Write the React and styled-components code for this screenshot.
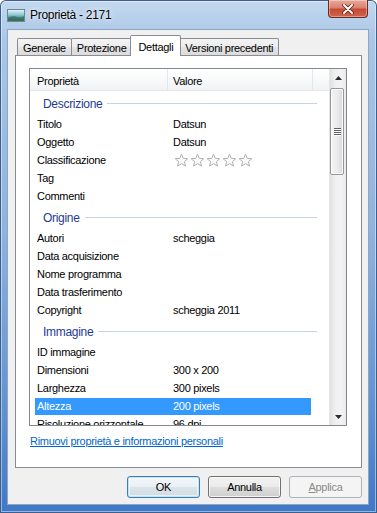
import React from 'react';
import styled, { createGlobalStyle } from 'styled-components';

const GlobalStyle = createGlobalStyle`
  html, body {
    margin: 0;
    padding: 0;
    background: #fff;
  }
  body {
    font-family: 'Liberation Sans', Arial, sans-serif;
  }
`;

const Window = styled.div`
  width: 377px;
  height: 513px;
  box-sizing: border-box;
  display: flex;
  flex-direction: column;
  padding: 0 8px 8px 7px;
  border-radius: 6px 6px 0 0;
  background: linear-gradient(180deg, #c3d9ef 0%, #a9c6e6 8%, #8fb3de 45%, #5f92d2 80%, #3f78c6 100%);
  box-shadow: inset 0 0 0 1px #3d5f8f, inset 0 0 0 2px rgba(255, 255, 255, 0.45);
`;

const TitleBar = styled.div`
  height: 29px;
  flex: none;
  display: flex;
`;

const AppIcon = styled.svg`
  align-self: center;
  margin-top: 1px;
  flex: none;
`;

const Caption = styled.span`
  align-self: center;
  margin-left: 5px;
  font-size: 12px;
  letter-spacing: -0.3px;
  color: #000;
  text-shadow: 0 0 6px rgba(255, 255, 255, 0.9), 0 0 2px rgba(255, 255, 255, 0.8);
`;

const CloseButton = styled.div`
  margin-left: auto;
  margin-right: 1px;
  width: 40px;
  height: 18px;
  box-sizing: border-box;
  display: flex;
  align-items: center;
  justify-content: center;
  border: 1px solid #6a2a22;
  border-top: none;
  border-radius: 0 0 4px 4px;
  background: linear-gradient(180deg, #e9a99b 0%, #d98170 45%, #c74a35 55%, #d0654c 100%);
  box-shadow: inset 0 0 0 1px rgba(255, 255, 255, 0.35);
`;

const Client = styled.div`
  flex: 1;
  display: flex;
  flex-direction: column;
  padding: 5px 6px 0 7px;
  background: #f0f0f0;
  border: 1px solid #8ea6c4;
`;

const TabStrip = styled.div`
  height: 20px;
  flex: none;
  display: flex;
  align-items: flex-end;
  padding-left: 2px;
  position: relative;
  z-index: 2;
`;

const Tab = styled.div`
  position: relative;
  box-sizing: border-box;
  height: ${({ $active }) => ($active ? '21px' : '17px')};
  margin-bottom: ${({ $active }) => ($active ? '-1px' : '0')};
  margin-left: ${({ $active }) => ($active ? '-2px' : '-1px')};
  margin-right: ${({ $active }) => ($active ? '-1px' : '0')};
  z-index: ${({ $active }) => ($active ? 2 : 1)};
  padding: ${({ $active }) => ($active ? '2px 7px 0' : '2px 5px 0')};
  display: flex;
  align-items: center;
  border: 1px solid #898c95;
  border-bottom: none;
  border-radius: 2px 2px 0 0;
  background: ${({ $active }) =>
    $active ? '#fff' : 'linear-gradient(180deg, #f3f3f3 0%, #ececec 50%, #e3e3e3 51%, #dcdcdc 100%)'};
  font-size: 11px;
  letter-spacing: -0.3px;
  color: #000;
  &:first-child {
    margin-left: 0;
  }
`;

const Panel = styled.div`
  height: 413px;
  box-sizing: border-box;
  flex: none;
  background: #fff;
  border: 1px solid #898c95;
  padding: 12px 14px 0 13px;
`;

const ListView = styled.div`
  width: 318px;
  height: 358px;
  box-sizing: border-box;
  display: flex;
  border: 1px solid #828790;
  background: #fff;
`;

const ListContent = styled.div`
  width: 299px;
  display: flex;
  flex-direction: column;
  overflow: hidden;
`;

const Header = styled.div`
  height: 22px;
  box-sizing: border-box;
  flex: none;
  display: flex;
  background: linear-gradient(180deg, #ffffff 0%, #fafbfb 40%, #f1f2f4 100%);
  border-bottom: 1px solid #e4e7eb;
`;

const HeaderCell = styled.div`
  box-sizing: border-box;
  width: ${({ $w }) => ($w ? `${$w}px` : 'auto')};
  flex: ${({ $w }) => ($w ? 'none' : '1')};
  padding: 3px 0 0 ${({ $pad }) => $pad || 0}px;
  display: flex;
  align-items: center;
  border-right: ${({ $w }) => ($w ? '1px solid #e3e6eb' : 'none')};
  font-size: 11px;
  letter-spacing: -0.3px;
  color: #000;
`;

const Rows = styled.div`
  flex: 1;
  padding-left: 5px;
  overflow: hidden;
`;

const GroupRow = styled.div`
  width: 282px;
  height: 24px;
  box-sizing: border-box;
  padding: 1px 0 0 8px;
  display: flex;
  align-items: center;
`;

const GroupLabel = styled.span`
  font-size: 12px;
  letter-spacing: -0.3px;
  color: #1e3a94;
`;

const GroupLine = styled.div`
  flex: 1;
  height: 1px;
  margin-left: 5px;
  background: #c6d4e6;
`;

const Row = styled.div`
  width: 276px;
  height: 18px;
  display: flex;
  align-items: center;
  font-size: 11px;
  letter-spacing: -0.3px;
  color: ${({ $selected }) => ($selected ? '#fff' : '#000')};
  background: ${({ $selected }) => ($selected ? '#3399ff' : 'transparent')};
  box-shadow: ${({ $selected }) => ($selected ? 'inset 0 1px 0 #fff' : 'none')};
`;

const Label = styled.span`
  width: 138px;
  box-sizing: border-box;
  padding-left: 2px;
  flex: none;
  white-space: nowrap;
`;

const Value = styled.span`
  display: flex;
  white-space: nowrap;
`;

const Stars = styled.span`
  display: flex;
  gap: 1px;
  margin-left: 1px;
`;

const ScrollBar = styled.div`
  width: 17px;
  display: flex;
  flex-direction: column;
  background: linear-gradient(90deg, #e1e1e1 0%, #efefef 30%, #f3f3f3 70%, #e9e9e9 100%);
  border-left: 1px solid #e6e6e6;
  box-sizing: border-box;
`;

const ArrowButton = styled.div`
  height: 17px;
  flex: none;
  display: flex;
  align-items: center;
  justify-content: center;
`;

const Thumb = styled.div`
  height: 87px;
  margin: 2px 2px 0 0;
  box-sizing: border-box;
  display: flex;
  flex-direction: column;
  align-items: center;
  justify-content: center;
  gap: 1px;
  border: 1px solid #979797;
  border-radius: 2px;
  background: linear-gradient(90deg, #f4f4f4 0%, #ececec 50%, #d9d9d9 100%);
  box-shadow: inset 0 0 0 1px rgba(255, 255, 255, 0.8);
`;

const Grip = styled.div`
  width: 7px;
  height: 1px;
  background: #5f5f5f;
  box-shadow: 0 1px 0 #fff;
`;

const Track = styled.div`
  flex: 1;
`;

const RemoveLink = styled.a`
  display: inline-block;
  margin: 9px 0 0 1px;
  font-size: 11px;
  letter-spacing: -0.3px;
  color: #0066cc;
  text-decoration: underline;
`;

const ButtonRow = styled.div`
  margin-top: 8px;
  display: flex;
  justify-content: flex-end;
  gap: 8px;
`;

const Button = styled.button`
  width: 73px;
  height: 22px;
  box-sizing: border-box;
  padding: 0;
  font-family: 'Liberation Sans', Arial, sans-serif;
  font-size: 11px;
  letter-spacing: -0.3px;
  border-radius: 3px;
  color: ${({ disabled }) => (disabled ? '#8a8a8a' : '#000')};
  border: 1px solid ${({ $default, disabled }) => ($default ? '#3c7fb1' : disabled ? '#adb2b5' : '#707070')};
  background: ${({ $default, disabled }) =>
    disabled
      ? '#f4f4f4'
      : $default
      ? 'linear-gradient(180deg, #f2f6f9 0%, #eaf0f4 50%, #dbe4ea 51%, #cfdbe3 100%)'
      : 'linear-gradient(180deg, #f2f2f2 0%, #ebebeb 50%, #dddddd 51%, #cfcfcf 100%)'};
  box-shadow: ${({ $default, disabled }) =>
    disabled ? 'none' : $default ? 'inset 0 0 0 1px #bfe2f7, inset 0 0 0 2px rgba(255,255,255,0.5)' : 'inset 0 0 0 1px rgba(255,255,255,0.75)'};
`;

const Star = () => (
  <svg width="15" height="15" viewBox="0 0 15 15">
    <path
      d="M7.5 1.2 L9.3 5.4 L13.8 5.7 L10.4 8.6 L11.5 13.1 L7.5 10.7 L3.5 13.1 L4.6 8.6 L1.2 5.7 L5.7 5.4 Z"
      fill="#fafafa"
      stroke="#a8a8a8"
      strokeWidth="0.9"
      strokeLinejoin="round"
    />
  </svg>
);

const Arrow = ({ down }) => (
  <svg width="7" height="4" viewBox="0 0 7 4">
    <path d={down ? 'M0 0 H7 L3.5 4 Z' : 'M3.5 0 L7 4 H0 Z'} fill="#2b2b2b" />
  </svg>
);

const groups = [
  {
    title: 'Descrizione',
    rows: [
      ['Titolo', 'Datsun'],
      ['Oggetto', 'Datsun'],
      ['Classificazione', 'stars'],
      ['Tag', ''],
      ['Commenti', ''],
    ],
  },
  {
    title: 'Origine',
    rows: [
      ['Autori', 'scheggia'],
      ['Data acquisizione', ''],
      ['Nome programma', ''],
      ['Data trasferimento', ''],
      ['Copyright', 'scheggia 2011'],
    ],
  },
  {
    title: 'Immagine',
    rows: [
      ['ID immagine', ''],
      ['Dimensioni', '300 x 200'],
      ['Larghezza', '300 pixels'],
      ['Altezza', '200 pixels'],
      ['Risoluzione orizzontale', '96 dpi'],
    ],
  },
];

export default function App() {
  return (
    <>
      <GlobalStyle />
      <Window>
        <TitleBar>
          <AppIcon width="18" height="13" viewBox="0 0 18 13">
            <defs>
              <linearGradient id="sky" x1="0" y1="0" x2="0" y2="1">
                <stop offset="0" stopColor="#e9f6f8" />
                <stop offset="0.45" stopColor="#8fc7d6" />
                <stop offset="0.7" stopColor="#3f8ea3" />
                <stop offset="1" stopColor="#2b5e6e" />
              </linearGradient>
            </defs>
            <rect x="0.5" y="0.5" width="17" height="12" fill="url(#sky)" stroke="#6d8793" />
            <path d="M1 9 Q6 6 10 8 T17 7 V12 H1 Z" fill="#3e6f58" opacity="0.8" />
          </AppIcon>
          <Caption>Proprietà - 2171</Caption>
          <CloseButton>
            <svg width="12" height="10" viewBox="0 0 12 10">
              <path d="M2 1 L10 9 M10 1 L2 9" stroke="#4a1a14" strokeWidth="3.4" strokeLinecap="round" />
              <path d="M2 1 L10 9 M10 1 L2 9" stroke="#fff" strokeWidth="2" strokeLinecap="round" />
            </svg>
          </CloseButton>
        </TitleBar>
        <Client>
          <TabStrip>
            <Tab>Generale</Tab>
            <Tab>Protezione</Tab>
            <Tab $active>Dettagli</Tab>
            <Tab>Versioni precedenti</Tab>
          </TabStrip>
          <Panel>
            <ListView>
              <ListContent>
                <Header>
                  <HeaderCell $w={138} $pad={7}>Proprietà</HeaderCell>
                  <HeaderCell $w={145} $pad={5}>Valore</HeaderCell>
                  <HeaderCell />
                </Header>
                <Rows>
                  {groups.map((g) => (
                    <React.Fragment key={g.title}>
                      <GroupRow>
                        <GroupLabel>{g.title}</GroupLabel>
                        <GroupLine />
                      </GroupRow>
                      {g.rows.map(([label, value]) => (
                        <Row key={label} $selected={label === 'Altezza'}>
                          <Label>{label}</Label>
                          <Value>
                            {value === 'stars' ? (
                              <Stars>
                                {[0, 1, 2, 3, 4].map((i) => (
                                  <Star key={i} />
                                ))}
                              </Stars>
                            ) : (
                              value
                            )}
                          </Value>
                        </Row>
                      ))}
                    </React.Fragment>
                  ))}
                </Rows>
              </ListContent>
              <ScrollBar>
                <ArrowButton>
                  <Arrow />
                </ArrowButton>
                <Thumb>
                  <Grip />
                  <Grip />
                  <Grip />
                  <Grip />
                </Thumb>
                <Track />
                <ArrowButton>
                  <Arrow down />
                </ArrowButton>
              </ScrollBar>
            </ListView>
            <RemoveLink href="#">Rimuovi proprietà e informazioni personali</RemoveLink>
          </Panel>
          <ButtonRow>
            <Button $default>OK</Button>
            <Button>Annulla</Button>
            <Button disabled>
              <u>A</u>pplica
            </Button>
          </ButtonRow>
        </Client>
      </Window>
    </>
  );
}
